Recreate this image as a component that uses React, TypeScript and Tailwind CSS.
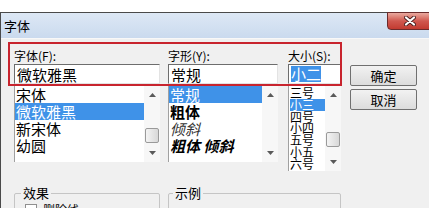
import React from "react";

const font = { fontFamily: '"Noto Sans CJK SC", "Noto Sans", sans-serif' };

function Arrow({ up }: { up?: boolean }) {
  return (
    <svg width="7" height="4" viewBox="0 0 7 4" className="block">
      {up ? <path d="M0 4 L3.5 0 L7 4 Z" fill="#5a5a5a" /> : <path d="M0 0 L3.5 4 L7 0 Z" fill="#5a5a5a" />}
    </svg>
  );
}

function Scrollbar({ thumbTop }: { thumbTop?: number }) {
  return (
    <div className="relative flex w-[16px] shrink-0 flex-col items-center justify-between bg-[#f7f7f7] py-[7px]">
      <Arrow up />
      {thumbTop !== undefined && (
        <div
          className="absolute left-[1px] h-[15px] w-[14px] rounded-[2px] border border-[#9a9a9a] bg-gradient-to-r from-[#f4f4f4] to-[#d8d8d8]"
          style={{ top: thumbTop }}
        />
      )}
      <Arrow />
    </div>
  );
}

function Input({ children, className = "" }: { children: React.ReactNode; className?: string }) {
  return (
    <div
      className={`flex h-[20px] items-center border border-t-[#6d6d6d] border-l-[#6d6d6d] border-r-[#e3e3e3] border-b-[#e3e3e3] bg-white px-[2px] text-[15px] leading-none text-black ${className}`}
    >
      {children}
    </div>
  );
}

export default function App() {
  return (
    <div className="relative h-[208px] w-[429px] overflow-hidden bg-white" style={font}>
      <div className="h-[12px] bg-white" />
      <div className="h-[196px] border-l border-t border-[#4a4a4a]">
        {/* title bar */}
        <div className="relative flex h-[25px] items-center bg-gradient-to-b from-[#dde8f5] to-[#cadaee] pl-[3px] text-[13px] text-black">
          字体
          <div className="absolute right-[-4px] top-[-1px] flex h-[18px] w-[46px] items-center justify-center rounded-b-[4px] border border-[#6b2b2b] bg-gradient-to-b from-[#e9a99f] via-[#d0584f] to-[#c23a30]">
            <svg width="12" height="10" viewBox="0 0 12 10">
              <path d="M2 1.5 L10 8.5 M10 1.5 L2 8.5" stroke="#4a2020" strokeWidth="4" strokeLinecap="round" />
              <path d="M2 1.5 L10 8.5 M10 1.5 L2 8.5" stroke="#ffffff" strokeWidth="2.2" strokeLinecap="round" />
            </svg>
          </div>
        </div>
        <div className="h-px bg-[#f8f8f8]" />

        {/* body */}
        <div className="h-[170px] bg-[#f0f0f0] pl-[13px] pt-[9px]">
          <div className="flex">
            {/* font column */}
            <div className="flex w-[146px] flex-col">
              <div className="h-[16px] text-[12px] leading-[16px] text-black">字体(F):</div>
              <Input>微软雅黑</Input>
              <div className="mt-[2px] flex h-[76px] border-l border-[#a0a0a0] bg-white">
                <div className="flex-1 text-[15px] leading-[17px] text-black">
                  <div className="pl-[1px]">宋体</div>
                  <div className="bg-[#3f92e8] pl-[1px] text-white">微软雅黑</div>
                  <div className="pl-[1px]">新宋体</div>
                  <div className="pl-[1px]">幼圆</div>
                </div>
                <Scrollbar thumbTop={42} />
              </div>
            </div>

            {/* style column */}
            <div className="ml-[8px] flex w-[110px] flex-col">
              <div className="h-[16px] text-[12px] leading-[16px] text-black">字形(Y):</div>
              <Input>常规</Input>
              <div className="mt-[2px] flex h-[76px] border-l border-[#a0a0a0] bg-white">
                <div className="flex-1 text-[15px] leading-[17px] text-black">
                  <div className="bg-[#3f92e8] pl-[1px] text-white">常规</div>
                  <div className="pl-[1px] font-bold">粗体</div>
                  <div className="pl-[1px] italic text-[#333]">倾斜</div>
                  <div className="whitespace-nowrap pl-[1px] font-bold italic">粗体 倾斜</div>
                </div>
                <Scrollbar />
              </div>
            </div>

            {/* size column */}
            <div className="ml-[10px] flex w-[53px] flex-col">
              <div className="h-[16px] text-[12px] leading-[16px] text-black">大小(S):</div>
              <Input>
                <span className="bg-[#3f92e8] leading-[16px] text-white">小二</span>
              </Input>
              <div className="mt-[2px] flex h-[85px] border-l border-[#a0a0a0] bg-white">
                <div className="flex-1 overflow-hidden pl-[1px] pt-[1px] text-[12px] leading-[11.8px] text-black">
                  <div>三号</div>
                  <div className="bg-[#3f92e8] text-white">小三</div>
                  <div>四号</div>
                  <div>小四</div>
                  <div>五号</div>
                  <div>小五</div>
                  <div>六号</div>
                </div>
                <Scrollbar thumbTop={46} />
              </div>
            </div>

            {/* buttons */}
            <div className="ml-[9px] flex w-[67px] flex-col gap-[3px] pt-[17px]">
              <button className="h-[21px] rounded-[2px] border border-[#707070] bg-gradient-to-b from-[#f2f2f2] to-[#dcdcdc] text-[13px] leading-none text-black">
                确定
              </button>
              <button className="h-[21px] rounded-[2px] border border-[#707070] bg-gradient-to-b from-[#f2f2f2] to-[#dcdcdc] text-[13px] leading-none text-black">
                取消
              </button>
            </div>
          </div>

          {/* group boxes */}
          <div className="mt-[22px] flex">
            <div className="relative h-[40px] w-[146px] rounded-[2px] border border-[#c5c5c5]">
              <span className="absolute left-[6px] top-[-8px] bg-[#f0f0f0] px-[2px] text-[13px] leading-[14px] text-black">效果</span>
              <div className="ml-[10px] mt-[9px] flex items-center gap-[6px]">
                <div className="h-[12px] w-[12px] border border-[#8f8f8f] bg-white" />
                <span className="text-[12px] leading-[14px] text-black">删除线</span>
              </div>
            </div>
            <div className="relative ml-[8px] h-[40px] w-[173px] rounded-[2px] border border-[#c5c5c5]">
              <span className="absolute left-[4px] top-[-8px] bg-[#f0f0f0] px-[2px] text-[13px] leading-[14px] text-black">示例</span>
            </div>
          </div>
        </div>
      </div>

      {/* red annotation box */}
      <div className="pointer-events-none absolute left-[8px] top-[42px] h-[44px] w-[334px] border-2 border-[#c8242e]" />
    </div>
  );
}
